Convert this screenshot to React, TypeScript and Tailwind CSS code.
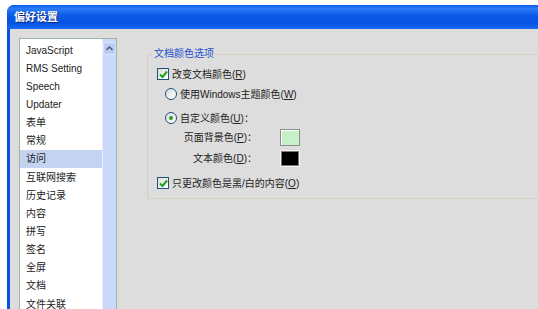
const items = [
  "JavaScript",
  "RMS Setting",
  "Speech",
  "Updater",
  "表单",
  "常规",
  "访问",
  "互联网搜索",
  "历史记录",
  "内容",
  "拼写",
  "签名",
  "全屏",
  "文档",
  "文件关联",
];

const font = "font-['Tahoma','Liberation_Sans','Noto_Sans_CJK_SC',sans-serif]";

function CheckBox() {
  return (
    <span className="w-[12px] h-[12px] border border-[#1c5180] bg-gradient-to-br from-[#dcdcd7] to-white flex items-center justify-center shrink-0">
      <svg width="9" height="9" viewBox="0 0 9 9">
        <path d="M1 4.5 L3.5 7 L8 1.5" fill="none" stroke="#21a121" strokeWidth="2" />
      </svg>
    </span>
  );
}

function Radio({ checked }: { checked?: boolean }) {
  return (
    <span className="w-[12px] h-[12px] rounded-full border border-[#1c5180] bg-gradient-to-br from-[#dcdcd7] to-white flex items-center justify-center shrink-0">
      {checked && <span className="w-[4px] h-[4px] rounded-full bg-[#21a121]" />}
    </span>
  );
}

export default function App() {
  return (
    <div className={`w-[538px] h-[309px] overflow-hidden bg-white pl-[7px] pt-[5px] ${font} text-[10px] text-[#222]`}>
      <div className="h-full rounded-tl-[7px] overflow-hidden flex flex-col bg-[#0a52e0]">
        <div className="h-[24px] shrink-0 flex items-center pl-[7px] bg-[linear-gradient(to_bottom,#0a5ae6_0%,#2b7cf6_15%,#0a5ae8_45%,#0552e2_75%,#1a6af5_100%)]">
          <span className="text-white font-bold text-[11px] [text-shadow:1px_1px_0_#0a2a80]">偏好设置</span>
        </div>
        <div className="flex-1 ml-[3px] bg-[#dddddd] flex">
          <div className="ml-[9px] mt-[9px] w-[98px] border border-[#9fb4a4] bg-white flex">
            <div className="flex-1 pt-[2px]">
              {items.map((t) => (
                <div
                  key={t}
                  className={`h-[18.15px] flex items-center pl-[6px] ${t === "访问" ? "bg-[#c3d3f0]" : ""}`}
                >
                  {t}
                </div>
              ))}
            </div>
            <div className="w-[14px] bg-[#cad9f9] border-l border-[#e8eefc] flex flex-col items-center">
              <div className="w-[13px] h-[13px] mt-[3px] rounded-[2px] bg-[#b9cdf7] border border-[#dbe5fb] flex items-center justify-center">
                <svg width="7" height="5" viewBox="0 0 7 5">
                  <path d="M0.5 4 L3.5 1 L6.5 4" fill="none" stroke="#4d6185" strokeWidth="1.6" />
                </svg>
              </div>
            </div>
          </div>

          <div className="ml-[30px] mt-[25px] flex-1">
            <div className="relative h-[145px] border border-r-0 border-[#d0d0bf] rounded-l-[3px] pt-[12px] pl-[9px]">
              <span className="absolute -top-[8px] left-[4px] px-[2px] bg-[#dddddd] text-[#1f4fd0] leading-[14px]">
                文档颜色选项
              </span>
              <div className="flex items-center gap-[3px] h-[14px]">
                <CheckBox />
                <span>改变文档颜色(<u>R</u>)</span>
              </div>
              <div className="flex items-center gap-[3px] h-[14px] mt-[6px] ml-[8px]">
                <Radio />
                <span>使用Windows主题颜色(<u>W</u>)</span>
              </div>
              <div className="flex items-center gap-[3px] h-[14px] mt-[10px] ml-[8px]">
                <Radio checked />
                <span>自定义颜色(<u>U</u>)：</span>
              </div>
              <div className="flex items-center h-[18px] mt-[3px]">
                <span className="w-[100px] text-right">页面背景色(<u>P</u>)：</span>
                <span className="ml-[23px] w-[20px] h-[17px] border border-[#8d8d8d] bg-[#c6f1c8] shadow-[inset_1px_1px_0_#fff]" />
              </div>
              <div className="flex items-center h-[18px] mt-[3px]">
                <span className="w-[100px] text-right">文本颜色(<u>D</u>)：</span>
                <span className="ml-[23px] w-[20px] h-[17px] border border-[#f4f4f4] bg-black shadow-[inset_0_0_0_1px_#7a7a7a]" />
              </div>
              <div className="flex items-center gap-[3px] h-[14px] mt-[9px]">
                <CheckBox />
                <span>只更改颜色是黑/白的内容(<u>O</u>)</span>
              </div>
            </div>
          </div>
        </div>
      </div>
    </div>
  );
}
